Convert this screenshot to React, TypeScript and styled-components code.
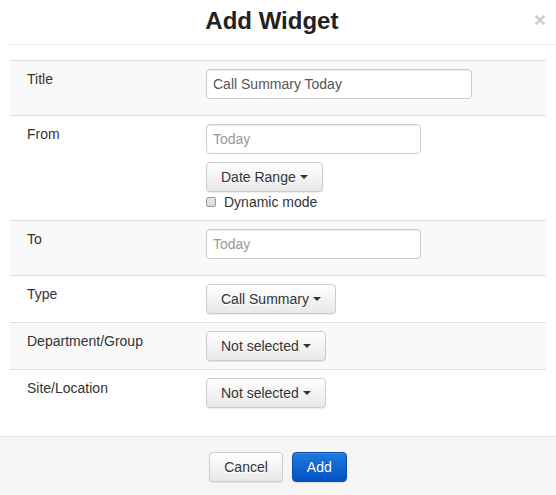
import styled, { createGlobalStyle } from "styled-components";

const GlobalStyle = createGlobalStyle`
  html, body {
    margin: 0;
    padding: 0;
    background: #fff;
  }
  body {
    font-family: "Liberation Sans", Arial, sans-serif;
    font-size: 14px;
    line-height: 20px;
    color: #333;
  }
  * {
    box-sizing: border-box;
  }
`;

const Modal = styled.div`
  width: 556px;
  display: flex;
  flex-direction: column;
  background: #fff;
`;

const Header = styled.div`
  margin-left: 10px;
  padding: 8px 10px 10px 0;
  display: flex;
  align-items: flex-start;
  border-bottom: 1px solid #eee;
`;

const Title = styled.h4`
  flex: 1;
  margin: 0;
  text-align: center;
  font-size: 24px;
  font-weight: bold;
  line-height: 26px;
  color: #222;
`;

const CloseButton = styled.button`
  border: none;
  background: transparent;
  padding: 0;
  margin-top: 1px;
  font-family: inherit;
  font-size: 21px;
  font-weight: bold;
  line-height: 1;
  color: #000;
  opacity: 0.2;
  cursor: pointer;
`;

const Body = styled.div`
  padding: 15px 10px 20px 10px;
`;

const FormTable = styled.div`
  display: flex;
  flex-direction: column;
`;

const Row = styled.div<{ $striped?: boolean }>`
  display: grid;
  grid-template-columns: 188px 1fr;
  border-top: 1px solid #ddd;
  background: ${({ $striped }) => ($striped ? "#f9f9f9" : "#fff")};
`;

const Label = styled.div`
  padding: 8px 8px 8px 17px;
`;

const Field = styled.div`
  padding: 8px;
  display: flex;
  flex-direction: column;
  align-items: flex-start;
`;

const TextInput = styled.input<{ $width: number }>`
  width: ${({ $width }) => $width}px;
  height: 30px;
  margin: 0 0 8px 0;
  padding: 0 6px;
  border: 1px solid #ccc;
  border-radius: 4px;
  box-shadow: inset 0 1px 1px rgba(0, 0, 0, 0.075);
  background: #fff;
  font-family: inherit;
  font-size: 14px;
  color: #555;
  outline: none;

  &::placeholder {
    color: #999;
  }
`;

const Button = styled.button<{ $primary?: boolean }>`
  display: inline-flex;
  align-items: center;
  height: 30px;
  padding: 0 14px;
  border: 1px solid ${({ $primary }) => ($primary ? "#0a4fae" : "#ccc")};
  border-radius: 4px;
  font-family: inherit;
  font-size: 14px;
  line-height: 20px;
  color: ${({ $primary }) => ($primary ? "#fff" : "#333")};
  background-image: ${({ $primary }) =>
    $primary
      ? "linear-gradient(to bottom, #2279dc 0%, #0052c4 100%)"
      : "linear-gradient(to bottom, #fff 0%, #e8e8e8 100%)"};
  box-shadow: inset 0 1px 0 rgba(255, 255, 255, 0.15), 0 1px 1px rgba(0, 0, 0, 0.075);
  text-shadow: ${({ $primary }) => ($primary ? "0 -1px 0 rgba(0,0,0,0.2)" : "0 1px 0 #fff")};
  cursor: pointer;
`;

const Caret = styled.span`
  display: inline-block;
  width: 0;
  height: 0;
  margin-left: 4px;
  border-top: 4px solid #333;
  border-left: 4px solid transparent;
  border-right: 4px solid transparent;
`;

const CheckLine = styled.label`
  display: flex;
  align-items: center;
  height: 20px;
  color: #333;
`;

const CheckBox = styled.span`
  width: 10px;
  height: 10px;
  margin-right: 8px;
  border: 1px solid #9a9a9a;
  border-radius: 2px;
  background: linear-gradient(to bottom, #ececec, #d8d8d8);
`;

const Footer = styled.div`
  padding: 15px 0 15px 0;
  display: flex;
  justify-content: center;
  gap: 9px;
  border-top: 1px solid #e5e5e5;
  background: #f5f5f5;
`;

const Dropdown = ({ text }: { text: string }) => (
  <Button type="button">
    {text}
    <Caret />
  </Button>
);

const App = () => {
  return (
    <>
      <GlobalStyle />
      <Modal>
        <Header>
          <Title>Add Widget</Title>
          <CloseButton type="button">×</CloseButton>
        </Header>
        <Body>
          <FormTable>
            <Row $striped>
              <Label>Title</Label>
              <Field>
                <TextInput $width={266} defaultValue="Call Summary Today" />
              </Field>
            </Row>
            <Row>
              <Label>From</Label>
              <Field>
                <TextInput $width={215} placeholder="Today" />
                <Dropdown text="Date Range" />
                <CheckLine>
                  <CheckBox />
                  Dynamic mode
                </CheckLine>
              </Field>
            </Row>
            <Row $striped>
              <Label>To</Label>
              <Field>
                <TextInput $width={215} placeholder="Today" />
              </Field>
            </Row>
            <Row>
              <Label>Type</Label>
              <Field>
                <Dropdown text="Call Summary" />
              </Field>
            </Row>
            <Row $striped>
              <Label>Department/Group</Label>
              <Field>
                <Dropdown text="Not selected" />
              </Field>
            </Row>
            <Row>
              <Label>Site/Location</Label>
              <Field>
                <Dropdown text="Not selected" />
              </Field>
            </Row>
          </FormTable>
        </Body>
        <Footer>
          <Button type="button">Cancel</Button>
          <Button type="button" $primary>
            Add
          </Button>
        </Footer>
      </Modal>
    </>
  );
};

export default App;
